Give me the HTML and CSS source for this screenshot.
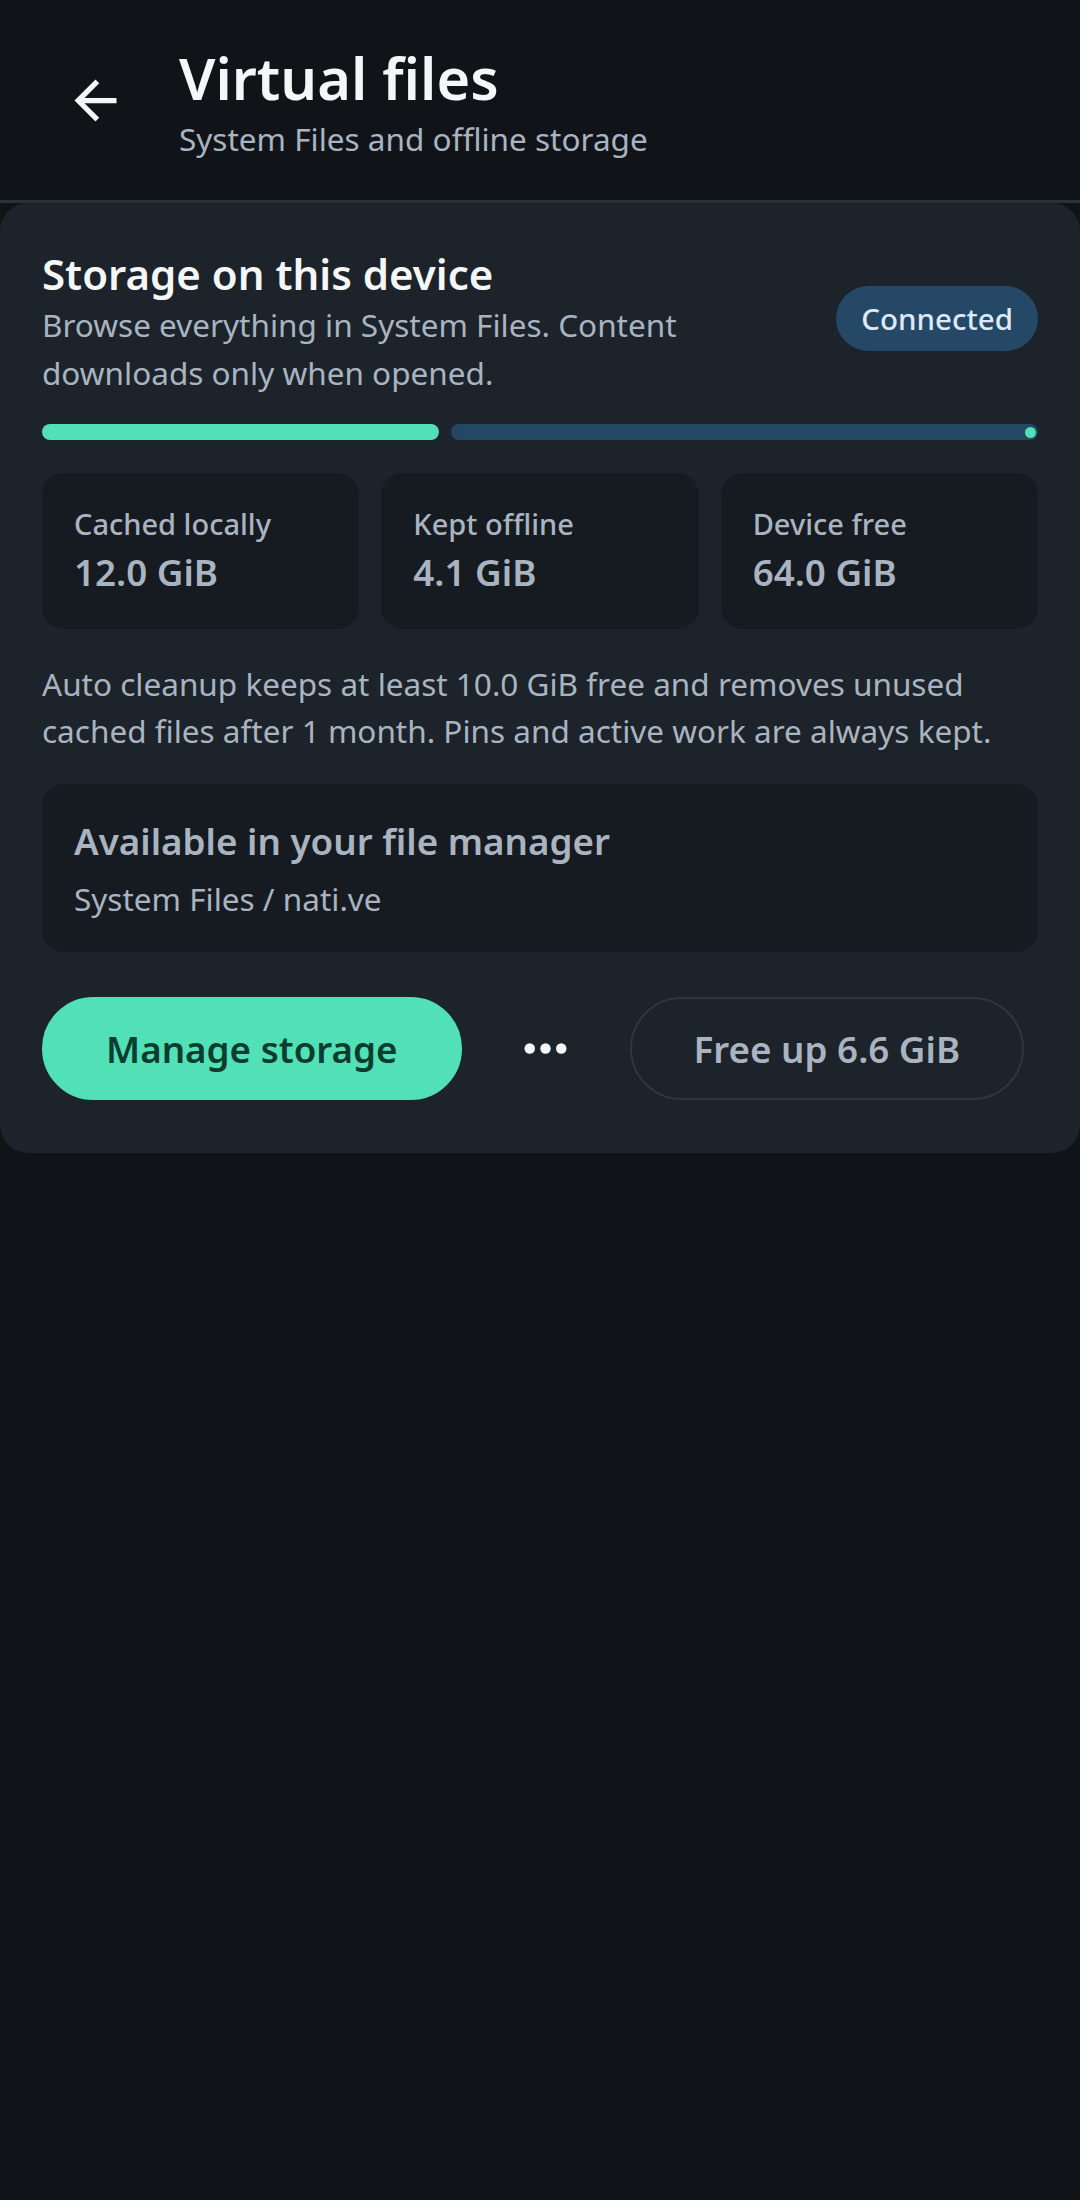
FILE: index.html
```html
<!DOCTYPE html>
<html lang="en">
<head>
<meta charset="utf-8">
<title>Virtual files</title>
<link rel="stylesheet" href="styles.css">
</head>
<body>
<header class="topbar">
  <div class="back">
    <svg viewBox="0 0 24 24" width="63" height="63" aria-hidden="true"><path fill="#f4f6f8" d="M20 11H7.83l5.59-5.59L12 4l-8 8 8 8 1.41-1.41L7.83 13H20v-2z"/></svg>
  </div>
  <div class="titles">
    <h1 class="title">Virtual files</h1>
    <p class="subtitle">System Files and offline storage</p>
  </div>
</header>

<main class="card">
  <div class="card-head">
    <div class="head-text">
      <h2 class="heading">Storage on this device</h2>
      <p class="desc">Browse everything in System Files. Content downloads only when opened.</p>
    </div>
    <span class="badge">Connected</span>
  </div>

  <div class="progress">
    <div class="progress-active"></div>
    <div class="progress-track"><span class="stop"></span></div>
  </div>

  <div class="stats">
    <div class="stat">
      <div class="stat-label">Cached locally</div>
      <div class="stat-value">12.0 GiB</div>
    </div>
    <div class="stat">
      <div class="stat-label">Kept offline</div>
      <div class="stat-value">4.1 GiB</div>
    </div>
    <div class="stat">
      <div class="stat-label">Device free</div>
      <div class="stat-value">64.0 GiB</div>
    </div>
  </div>

  <p class="note">Auto cleanup keeps at least 10.0 GiB free and removes unused cached files after 1 month. Pins and active work are always kept.</p>

  <div class="fm">
    <div class="fm-title">Available in your file manager</div>
    <div class="fm-path">System Files / nati.ve</div>
  </div>

  <div class="actions">
    <button class="btn btn-primary">Manage storage</button>
    <button class="icon-btn" aria-label="More">
      <svg viewBox="0 0 24 24" width="63" height="63" aria-hidden="true"><circle cx="6" cy="12" r="2" fill="#f4f6f8"/><circle cx="12" cy="12" r="2" fill="#f4f6f8"/><circle cx="18" cy="12" r="2" fill="#f4f6f8"/></svg>
    </button>
    <button class="btn btn-outline">Free up 6.6 GiB</button>
  </div>
</main>
</body>
</html>
```
FILE: styles.css
```css
* { box-sizing: border-box; }
html, body {
  margin: 0;
  padding: 0;
  background: #101418;
  font-family: "Noto Sans", "Open Sans", sans-serif;
  color: #a9b4c0;
}
body { min-height: 2200px; }

.topbar {
  height: 203px;
  border-bottom: 3px solid #29323b;
  background: #101418;
  display: flex;
  align-items: flex-start;
}
.back {
  width: 63px;
  height: 63px;
  margin-left: 64px;
  margin-top: 69px;
  flex: none;
}
.back svg { display: block; }
.titles {
  margin-left: 52px;
  padding-top: 44px;
}
.title {
  margin: 0;
  font-size: 57.75px;
  line-height: 68px;
  font-weight: 600;
  color: #f4f6f8;
}
.subtitle {
  margin: 6px 0 0;
  font-size: 31.5px;
  line-height: 42px;
  color: #a9b4c0;
}

.card {
  display: block;
  background: #1c232a;
  border-radius: 28px;
  padding: 43px 42px 53px;
}
.card-head {
  display: flex;
  align-items: center;
  justify-content: space-between;
}
.head-text { max-width: 690px; }
.heading {
  margin: 0;
  font-size: 42px;
  line-height: 55px;
  font-weight: 600;
  color: #f4f6f8;
}
.desc {
  margin: 0;
  font-size: 31.5px;
  line-height: 47.5px;
  color: #a9b4c0;
}
.badge {
  flex: none;
  height: 65px;
  margin-bottom: 6px;
  padding: 0 25px;
  border-radius: 33px;
  background: #244866;
  color: #dde9f8;
  font-size: 29.5px;
  font-weight: 500;
  display: flex;
  align-items: center;
}

.progress {
  margin-top: 28px;
  height: 16px;
  display: flex;
  gap: 12px;
}
.progress-active {
  width: 397px;
  flex: none;
  border-radius: 8px;
  background: #52e0b6;
}
.progress-track {
  flex: 1;
  border-radius: 8px;
  background: #244763;
  position: relative;
}
.stop {
  position: absolute;
  right: 2.5px;
  top: 2.5px;
  width: 11px;
  height: 11px;
  border-radius: 50%;
  background: #52e0b6;
}

.stats {
  margin-top: 33px;
  display: grid;
  grid-template-columns: repeat(3, 1fr);
  gap: 22px;
}
.stat {
  background: #161b21;
  border-radius: 22px;
  padding: 31px 32px 33px;
}
.stat-label {
  font-size: 29px;
  line-height: 40px;
  font-weight: 500;
  color: #a9b4c0;
}
.stat-value {
  margin-top: 4px;
  font-size: 36.75px;
  line-height: 48px;
  font-weight: 600;
  color: #a9b4c0;
}

.note {
  margin: 31px 0 0;
  font-size: 31.5px;
  line-height: 47px;
  color: #a9b4c0;
}

.fm {
  margin-top: 30px;
  background: #161b21;
  border-radius: 22px;
  padding: 33px 32px 30px;
}
.fm-title {
  font-size: 36.75px;
  line-height: 48px;
  font-weight: 600;
  color: #a9b4c0;
}
.fm-path {
  margin-top: 10px;
  font-size: 31.5px;
  line-height: 47px;
  color: #a9b4c0;
}

.actions {
  margin-top: 45px;
  display: flex;
  align-items: center;
  gap: 21px;
}
.btn {
  height: 103px;
  padding: 0 62px;
  border-radius: 52px;
  font-family: inherit;
  font-size: 36.75px;
  font-weight: 600;
  border: 2px solid transparent;
  display: flex;
  align-items: center;
}
.btn-primary {
  background: #52e0b6;
  border-color: #52e0b6;
  color: #0b3d2e;
}
.btn-outline {
  background: transparent;
  border-color: #2d3741;
  color: #a9b4c0;
}
.icon-btn {
  width: 126px;
  height: 103px;
  padding: 0;
  border: 0;
  background: transparent;
  display: flex;
  align-items: center;
  justify-content: center;
}
.icon-btn svg { display: block; }
```
